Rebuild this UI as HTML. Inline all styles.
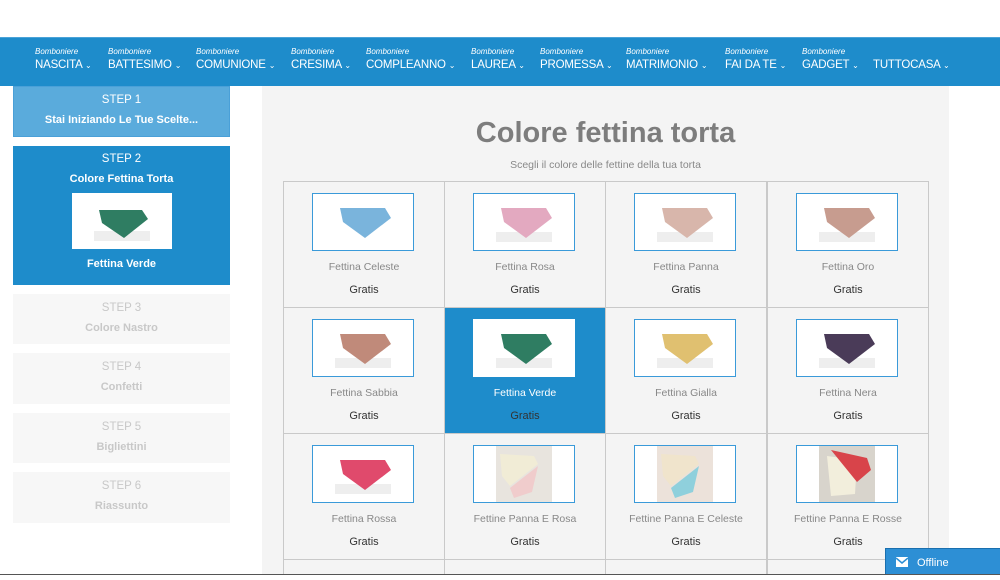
<!DOCTYPE html>
<html style="width:1000px;height:580px;overflow:hidden"><head><meta charset="utf-8"><style>
*{margin:0;padding:0;box-sizing:border-box}
body{width:1000px;height:580px;overflow:hidden;background:#fff;font-family:"Liberation Sans",sans-serif;position:relative}
.nav{position:absolute;top:37px;left:0;width:1000px;height:49px;background:#1e8ccb;border-top:1px solid #4aa3d8}
.ni{position:absolute;color:#fff}
.ni i{position:absolute;top:9px;left:0;font-size:8px;white-space:nowrap}
.ni b{position:absolute;top:21px;left:0;font-size:11.5px;letter-spacing:-0.2px;font-weight:normal;white-space:nowrap}
.ni b small{font-size:8px}
.side{position:absolute;left:13px;width:217px;text-align:center;font-size:11px;font-weight:bold}
.side .s{font-weight:normal;font-size:11.5px;display:block}
.main{position:absolute;left:262px;top:86px;width:687px;height:488px;background:#f4f4f4;overflow:hidden}
h1{position:absolute;left:0;width:687px;top:31px;text-align:center;font-size:29px;color:#7d7d7d;font-weight:bold}
.sub{position:absolute;left:0;width:687px;top:73px;text-align:center;font-size:10.5px;color:#888}
.grid{position:absolute;left:21px;top:95px;width:647px}
.c{position:absolute;width:162px;height:127px;border:1px solid #c9c9c9;background:#f4f4f4;text-align:center}
.c.sel{background:#1e8ccb}
.c.last{height:15px;border-bottom:none}
.im{position:absolute;left:28px;top:11px;width:102px;height:58px;background:#fff;border:1px solid #3a9ad9;overflow:hidden}
.c.sel .im{border-color:#fff}
.nm{position:absolute;top:79px;left:0;width:100%;font-size:10.5px;color:#888}
.g{position:absolute;top:102px;left:0;width:100%;font-size:11px;color:#333}
.c.sel .nm{color:#fff}
.off{position:absolute;left:885px;top:548px;width:115px;height:26px;background:#2d8fd5;color:#fff;font-size:11px;border-top:1px solid #1a6fae;border-left:1px solid #1a6fae}
</style></head><body>
<div class="nav">
<div class="ni" style="left:35px"><i>Bomboniere</i><b>NASCITA <small>⌄</small></b></div>
<div class="ni" style="left:108px"><i>Bomboniere</i><b>BATTESIMO <small>⌄</small></b></div>
<div class="ni" style="left:196px"><i>Bomboniere</i><b>COMUNIONE <small>⌄</small></b></div>
<div class="ni" style="left:291px"><i>Bomboniere</i><b>CRESIMA <small>⌄</small></b></div>
<div class="ni" style="left:366px"><i>Bomboniere</i><b>COMPLEANNO <small>⌄</small></b></div>
<div class="ni" style="left:471px"><i>Bomboniere</i><b>LAUREA <small>⌄</small></b></div>
<div class="ni" style="left:540px"><i>Bomboniere</i><b>PROMESSA <small>⌄</small></b></div>
<div class="ni" style="left:626px"><i>Bomboniere</i><b>MATRIMONIO <small>⌄</small></b></div>
<div class="ni" style="left:725px"><i>Bomboniere</i><b>FAI DA TE <small>⌄</small></b></div>
<div class="ni" style="left:802px"><i>Bomboniere</i><b>GADGET <small>⌄</small></b></div>
<div class="ni" style="left:873px"><b>TUTTOCASA <small>⌄</small></b></div>
</div>
<div class="side" style="top:86px;height:51px;background:#5aabdc;color:#fff;border:1px solid #4aa0d8"><span class="s" style="margin-top:7px">STEP 1</span><div style="margin-top:8px">Stai Iniziando Le Tue Scelte...</div></div>
<div class="side" style="top:146px;height:139px;background:#1e8ccb;color:#fff"><span class="s" style="margin-top:7px">STEP 2</span><div style="margin-top:8px">Colore Fettina Torta</div>
<div style="margin:8px auto 0;width:100px;height:56px;background:#fff;position:relative"><svg width="100" height="56"><rect x="22" y="38" width="56" height="10" fill="#eee"/><polygon points="27,17 70,17 76,26 52,45 30,30" fill="#2f7d62"/></svg></div>
<div style="margin-top:9px">Fettina Verde</div></div>
<div class="side" style="top:294px;height:50px;background:#f7f7f7;color:#c8c8c8"><span class="s" style="margin-top:8px">STEP 3</span><div style="margin-top:8px">Colore Nastro</div></div>
<div class="side" style="top:353px;height:51px;background:#f7f7f7;color:#c8c8c8"><span class="s" style="margin-top:8px">STEP 4</span><div style="margin-top:8px">Confetti</div></div>
<div class="side" style="top:413px;height:50px;background:#f7f7f7;color:#c8c8c8"><span class="s" style="margin-top:8px">STEP 5</span><div style="margin-top:8px">Bigliettini</div></div>
<div class="side" style="top:472px;height:51px;background:#f7f7f7;color:#c8c8c8"><span class="s" style="margin-top:8px">STEP 6</span><div style="margin-top:8px">Riassunto</div></div>
<div class="main">
<h1>Colore fettina torta</h1>
<div class="sub">Scegli il colore delle fettine della tua torta</div>
<div class="grid">
<div class="c" style="left:0;top:0"><div class="im"><svg width="100" height="56"><polygon points="27,14 72,14 78,24 52,44 30,28" fill="#7ab4dc"/></svg></div><div class="nm">Fettina Celeste</div><div class="g">Gratis</div></div>
<div class="c" style="left:161px;top:0"><div class="im"><svg width="100" height="56"><rect x="22" y="38" width="56" height="10" fill="#eee"/><polygon points="27,14 72,14 78,24 52,44 30,28" fill="#e3a9c0"/></svg></div><div class="nm">Fettina Rosa</div><div class="g">Gratis</div></div>
<div class="c" style="left:322px;top:0"><div class="im"><svg width="100" height="56"><rect x="22" y="38" width="56" height="10" fill="#eee"/><polygon points="27,14 72,14 78,24 52,44 30,28" fill="#d8b6ab"/></svg></div><div class="nm">Fettina Panna</div><div class="g">Gratis</div></div>
<div class="c" style="left:484px;top:0"><div class="im"><svg width="100" height="56"><rect x="22" y="38" width="56" height="10" fill="#eee"/><polygon points="27,14 72,14 78,24 52,44 30,28" fill="#c79c8f"/></svg></div><div class="nm">Fettina Oro</div><div class="g">Gratis</div></div>
<div class="c" style="left:0;top:126px"><div class="im"><svg width="100" height="56"><rect x="22" y="38" width="56" height="10" fill="#eee"/><polygon points="27,14 72,14 78,24 52,44 30,28" fill="#c08a7a"/></svg></div><div class="nm">Fettina Sabbia</div><div class="g">Gratis</div></div>
<div class="c sel" style="left:161px;top:126px"><div class="im"><svg width="100" height="56"><rect x="22" y="38" width="56" height="10" fill="#eee"/><polygon points="27,14 72,14 78,24 52,44 30,28" fill="#2f7d62"/></svg></div><div class="nm">Fettina Verde</div><div class="g">Gratis</div></div>
<div class="c" style="left:322px;top:126px"><div class="im"><svg width="100" height="56"><rect x="22" y="38" width="56" height="10" fill="#eee"/><polygon points="27,14 72,14 78,24 52,44 30,28" fill="#e0c070"/></svg></div><div class="nm">Fettina Gialla</div><div class="g">Gratis</div></div>
<div class="c" style="left:484px;top:126px"><div class="im"><svg width="100" height="56"><rect x="22" y="38" width="56" height="10" fill="#eee"/><polygon points="27,14 72,14 78,24 52,44 30,28" fill="#4a3b58"/></svg></div><div class="nm">Fettina Nera</div><div class="g">Gratis</div></div>
<div class="c" style="left:0;top:252px"><div class="im"><svg width="100" height="56"><rect x="22" y="38" width="56" height="10" fill="#eee"/><polygon points="27,14 72,14 78,24 52,44 30,28" fill="#e04a6c"/></svg></div><div class="nm">Fettina Rossa</div><div class="g">Gratis</div></div>
<div class="c" style="left:161px;top:252px"><div class="im"><svg width="100" height="56"><rect x="22" y="0" width="56" height="56" fill="#e8e4de"/><polygon points="26,8 60,10 64,18 36,40 28,30" fill="#f1ecd6"/><polygon points="64,20 36,42 40,52 58,46" fill="#f0cccc"/></svg></div><div class="nm">Fettine Panna E Rosa</div><div class="g">Gratis</div></div>
<div class="c" style="left:322px;top:252px"><div class="im"><svg width="100" height="56"><rect x="22" y="0" width="56" height="56" fill="#ece2da"/><polygon points="26,8 60,10 64,18 36,40 28,30" fill="#f0e4cc"/><polygon points="64,20 36,42 40,52 58,46" fill="#8fd0dc"/></svg></div><div class="nm">Fettine Panna E Celeste</div><div class="g">Gratis</div></div>
<div class="c" style="left:484px;top:252px"><div class="im"><svg width="100" height="56"><rect x="22" y="0" width="56" height="56" fill="#d8d4cc"/><polygon points="30,10 60,14 58,48 34,50" fill="#f2eedc"/><polygon points="34,4 70,12 74,24 60,36" fill="#d8444a"/></svg></div><div class="nm">Fettine Panna E Rosse</div><div class="g">Gratis</div></div>
<div class="c last" style="left:0;top:378px"></div><div class="c last" style="left:161px;top:378px"></div><div class="c last" style="left:322px;top:378px"></div><div class="c last" style="left:484px;top:378px"></div>
</div></div>
<div style="position:absolute;left:0;top:574px;width:1000px;height:6px;background:#fff;border-top:1px solid #555"></div>
<div class="off"><svg style="position:absolute;left:10px;top:8px" width="12" height="10"><rect width="12" height="10" fill="#fff"/><polyline points="0,1 6,6 12,1" fill="none" stroke="#2d8fd5" stroke-width="1.5"/></svg><span style="position:absolute;left:31px;top:8px">Offline</span></div>
</body></html>
